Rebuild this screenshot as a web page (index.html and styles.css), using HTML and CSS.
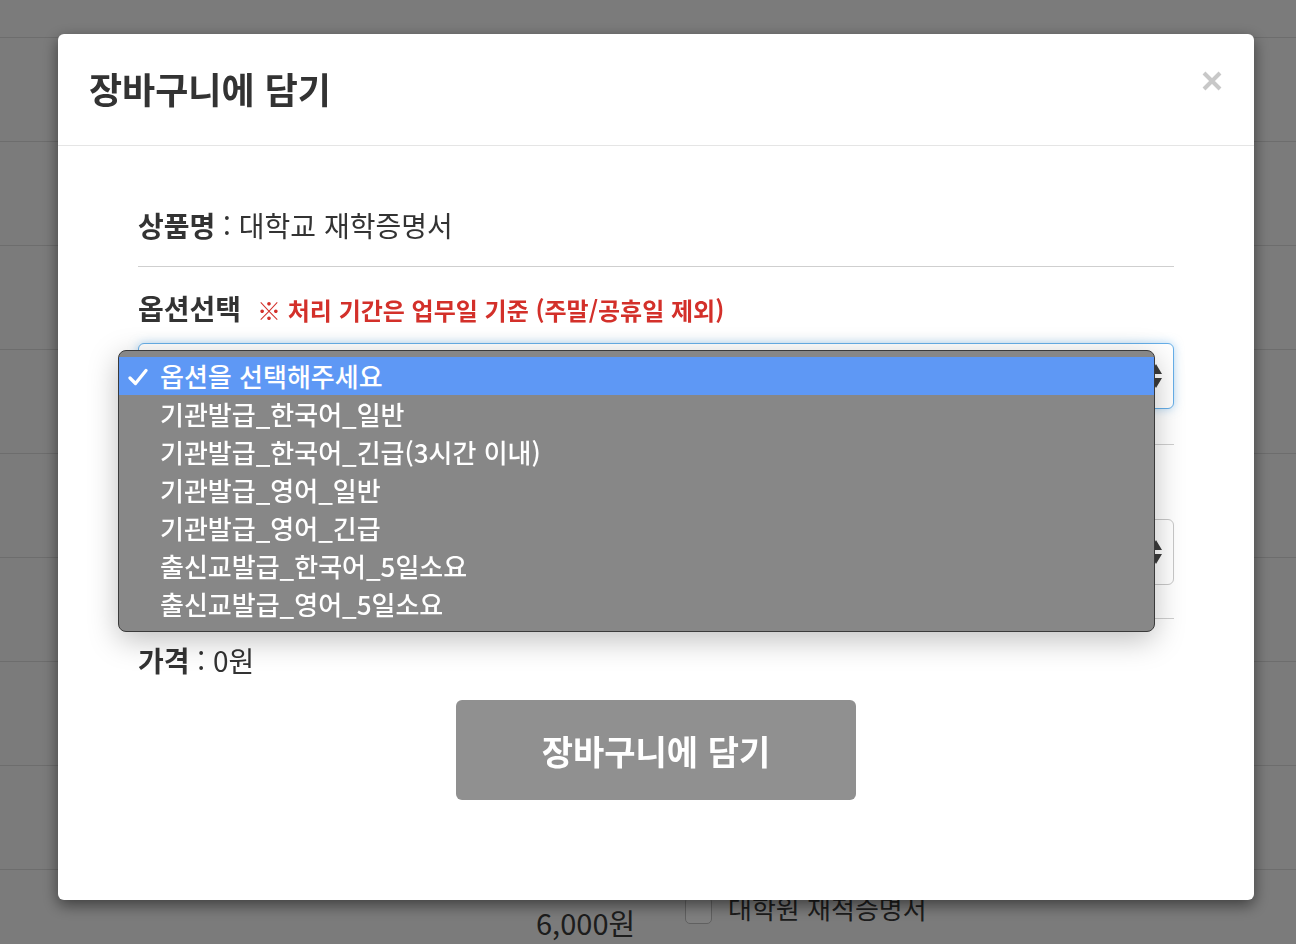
FILE: index.html
```html
<!DOCTYPE html>
<html lang="ko">
<head>
    <meta charset="UTF-8">
    <meta name="viewport" content="width=device-width, initial-scale=1.0">
    <title>장바구니에 담기</title>
    <link rel="stylesheet" href="styles.css">
</head>
<body>
    <!-- page behind the dialog -->
    <div class="page">
        <div class="page-row first"></div>
        <div class="page-row"></div>
        <div class="page-row"></div>
        <div class="page-row"></div>
        <div class="page-row"></div>
        <div class="page-row"></div>
        <div class="page-row"></div>
        <div class="page-row"></div>
        <div class="page-row"></div>
        <div class="page-row item">
            <span class="item-price">6,000원</span>
            <span class="item-check"></span>
            <span class="item-name">대학원 재적증명서</span>
        </div>
    </div>

    <div class="backdrop"></div>

    <div class="modal">
        <div class="modal-dialog">
            <div class="modal-header">
                <h4 class="modal-title">장바구니에 담기</h4>
                <button class="close" type="button" aria-label="닫기">
                    <svg width="22" height="22" viewBox="0 0 22 22">
                        <path d="M3 3 L19 19 M19 3 L3 19" stroke="#c8c8c8" stroke-width="4" stroke-linecap="butt"/>
                    </svg>
                </button>
            </div>

            <div class="modal-body">
                <div class="field product">
                    <b>상품명</b> : 대학교 재학증명서
                </div>

                <div class="field option">
                    <div class="field-label">
                        <b>옵션선택</b>
                        <span class="notice">※ 처리 기간은 업무일 기준 (주말/공휴일 제외)</span>
                    </div>
                    <div class="select focus">
                        <span>옵션을 선택해주세요</span>
                        <svg class="arrows" width="14" height="28" viewBox="0 0 14 28">
                            <path d="M7 2 L13 12 L1 12 Z M7 26 L13 16 L1 16 Z" fill="#3c3c3c"/>
                        </svg>
                    </div>
                </div>

                <div class="field option">
                    <div class="field-label"><b>수량</b></div>
                    <div class="select">
                        <span>1</span>
                        <svg class="arrows" width="14" height="28" viewBox="0 0 14 28">
                            <path d="M7 2 L13 12 L1 12 Z M7 26 L13 16 L1 16 Z" fill="#3c3c3c"/>
                        </svg>
                    </div>
                </div>

                <div class="field price">
                    <b>가격</b> : 0원
                </div>

                <div class="actions">
                    <button class="btn-cart" type="button" disabled>장바구니에 담기</button>
                </div>
            </div>

            <!-- open native option list -->
            <ul class="option-menu">
                <li class="selected">
                    <svg class="check" width="20" height="18" viewBox="0 0 20 18">
                        <path d="M2 10 L7.5 15.5 L18 2.5" fill="none" stroke="#fff" stroke-width="3.2" stroke-linecap="round" stroke-linejoin="round"/>
                    </svg>
                    옵션을 선택해주세요
                </li>
                <li>기관발급_한국어_일반</li>
                <li>기관발급_한국어_긴급(3시간 이내)</li>
                <li>기관발급_영어_일반</li>
                <li>기관발급_영어_긴급</li>
                <li>출신교발급_한국어_5일소요</li>
                <li>출신교발급_영어_5일소요</li>
            </ul>
        </div>
    </div>
</body>
</html>
```

FILE: styles.css
```css
* {
    margin: 0;
    padding: 0;
    box-sizing: border-box;
}

html, body {
    height: 100%;
    overflow: hidden;
}

body {
    font-family: "Noto Sans CJK KR", "Noto Sans", sans-serif;
    background: #f6f6f6;
    color: #333;
}

/* background page */
.page-row {
    height: 104px;
    border-bottom: 1px solid #dadada;
}

.page-row.first {
    height: 38px;
}

.page-row.item {
    display: flex;
    align-items: center;
    padding-left: 536px;
    font-size: 29px;
    color: #3a3a3a;
}

.item-price {
    width: 149px;
}

.item-check {
    width: 27px;
    height: 27px;
    border: 1px solid #c0c0c0;
    border-radius: 5px;
    background: #fff;
    margin-right: 16px;
    margin-bottom: 22px;
}

.item-name {
    font-size: 26px;
    margin-bottom: 28px;
}

.backdrop {
    position: fixed;
    inset: 0;
    background: rgba(0,0,0,0.5);
}

/* dialog */
.modal {
    position: fixed;
    inset: 0;
}

.modal-dialog {
    position: relative;
    width: 1196px;
    margin: 34px 0 0 58px;
    background: #fff;
    border-radius: 6px;
    box-shadow: 0 5px 15px rgba(0,0,0,0.5);
}

.modal-header {
    display: flex;
    justify-content: space-between;
    align-items: center;
    height: 112px;
    padding: 0 31px 4px 31px;
    border-bottom: 1px solid #e5e5e5;
}

.modal-title {
    font-size: 36px;
    font-weight: 700;
    color: #333;
}

.close {
    border: none;
    background: none;
    cursor: pointer;
    margin-top: -14px;
}

.close svg {
    display: block;
}

.modal-body {
    padding: 0 80px 100px;
}

.field {
    font-size: 28px;
    line-height: 34px;
    color: #333;
}

.field b {
    font-weight: 700;
}

.product {
    padding: 62px 0 24px;
    border-bottom: 1px solid #cfcfcf;
}

.option {
    padding: 24px 0 35px;
    border-bottom: 1px solid #cfcfcf;
}

.option + .option {
    padding-bottom: 33px;
}

.field-label {
    display: flex;
    align-items: baseline;
    margin-bottom: 16px;
}

.notice {
    margin-left: 16px;
    font-size: 24px;
    font-weight: 700;
    color: #d3302a;
}

.select {
    display: flex;
    justify-content: space-between;
    align-items: center;
    height: 66px;
    padding: 0 10px 0 22px;
    border: 1px solid #c8c8c8;
    border-radius: 6px;
    background: #fff;
}

.select.focus {
    border-color: #66afe9;
    box-shadow: 0 0 10px rgba(102,175,233,0.5);
}

.price {
    padding: 24px 0 0;
}

.actions {
    display: flex;
    justify-content: center;
    margin-top: 23px;
}

.btn-cart {
    width: 400px;
    height: 100px;
    border: none;
    border-radius: 6px;
    background: #909090;
    color: #fff;
    font-family: inherit;
    font-size: 34px;
    font-weight: 700;
}

/* native-looking option list */
.option-menu {
    position: absolute;
    left: 60px;
    top: 316px;
    width: 1037px;
    height: 282px;
    padding-top: 6px;
    list-style: none;
    background: #878787;
    border: 1px solid #3a3a3a;
    border-radius: 8px;
    box-shadow: 0 8px 30px rgba(0,0,0,0.25);
}

.option-menu li {
    position: relative;
    height: 38px;
    padding-left: 41px;
    font-size: 26px;
    font-weight: 500;
    line-height: 38px;
    color: #fff;
}

.option-menu li.selected {
    background: #5e98f5;
}

.check {
    position: absolute;
    left: 9px;
    top: 11px;
}
```
